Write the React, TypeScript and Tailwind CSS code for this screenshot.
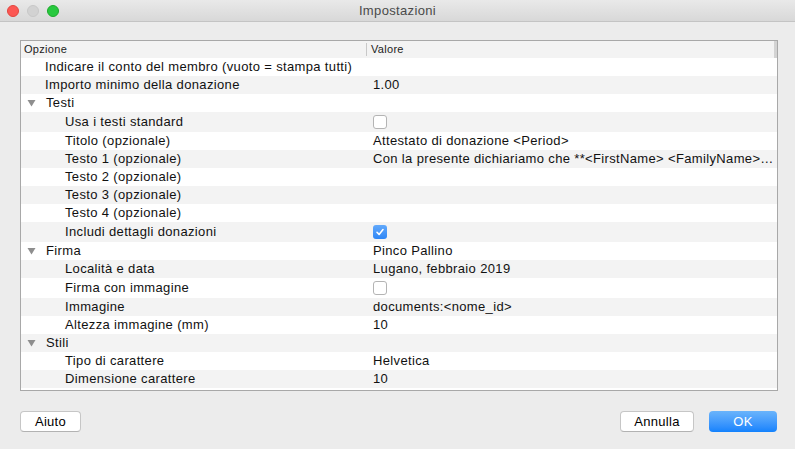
import React from "react";

type Row = {
  label: string;
  level: 0 | 1 | 2; // 0 = top item, 1 = group with triangle, 2 = child
  value?: string;
  check?: boolean;
};

const rows: Row[] = [
  { label: "Indicare il conto del membro (vuoto = stampa tutti)", level: 0 },
  { label: "Importo minimo della donazione", level: 0, value: "1.00" },
  { label: "Testi", level: 1 },
  { label: "Usa i testi standard", level: 2, check: false },
  { label: "Titolo (opzionale)", level: 2, value: "Attestato di donazione <Period>" },
  {
    label: "Testo 1 (opzionale)",
    level: 2,
    value: "Con la presente dichiariamo che **<FirstName> <FamilyName>…",
  },
  { label: "Testo 2 (opzionale)", level: 2 },
  { label: "Testo 3 (opzionale)", level: 2 },
  { label: "Testo 4 (opzionale)", level: 2 },
  { label: "Includi dettagli donazioni", level: 2, check: true },
  { label: "Firma", level: 1, value: "Pinco Pallino" },
  { label: "Località e data", level: 2, value: "Lugano, febbraio 2019" },
  { label: "Firma con immagine", level: 2, check: false },
  { label: "Immagine", level: 2, value: "documents:<nome_id>" },
  { label: "Altezza immagine (mm)", level: 2, value: "10" },
  { label: "Stili", level: 1 },
  { label: "Tipo di carattere", level: 2, value: "Helvetica" },
  { label: "Dimensione carattere", level: 2, value: "10" },
];

function Checkbox({ checked }: { checked: boolean }) {
  if (checked) {
    return (
      <span className="flex h-[14px] w-[14px] items-center justify-center rounded-[3px] bg-gradient-to-b from-[#62a9fb] to-[#2d86f6]">
        <svg width="10" height="10" viewBox="0 0 10 10">
          <path d="M2 5.3 L4.1 7.4 L8 2.6" fill="none" stroke="#fff" strokeWidth="1.6" strokeLinecap="round" strokeLinejoin="round" />
        </svg>
      </span>
    );
  }
  return <span className="block h-[14px] w-[14px] rounded-[3px] border border-[#b4b4b4] bg-white" />;
}

function Triangle() {
  return (
    <svg width="9" height="8" viewBox="0 0 9 8" className="mr-[10px]">
      <path d="M0.5 1 L8.5 1 L4.5 7.5 Z" fill="#8e8e8e" />
    </svg>
  );
}

function Button({ children, primary, width }: { children: React.ReactNode; primary?: boolean; width: string }) {
  return (
    <button
      className={
        primary
          ? `h-[21px] ${width} shrink-0 rounded-[4px] bg-gradient-to-b from-[#6ab4fb] to-[#1182fd] text-[13px] leading-none tracking-[0.3px] text-white`
          : `h-[21px] ${width} shrink-0 rounded-[4px] border border-[#c6c6c6] border-b-[#b2b2b2] bg-white text-[13px] leading-none tracking-[0.3px] text-black`
      }
    >
      {children}
    </button>
  );
}

export default function App() {
  return (
    <div
      className="flex h-[449px] w-[795px] flex-col bg-[#ececec] text-[#111]"
      style={{ fontFamily: '"Liberation Sans", Arial, sans-serif' }}
    >
      {/* Title bar */}
      <div className="grid h-[22px] grid-cols-[1fr_auto_1fr] items-center border-b border-[#c4c4c4] bg-gradient-to-b from-[#e9e9e9] to-[#d8d8d8]">
        <div className="flex items-center gap-[8px] pl-[7px]">
          <span className="h-[12px] w-[12px] rounded-full border border-[#e2463f] bg-[#fc5753]" />
          <span className="h-[12px] w-[12px] rounded-full border border-[#c8c8c8] bg-[#d2d2d2]" />
          <span className="h-[12px] w-[12px] rounded-full border border-[#1daa2b] bg-[#28c93f]" />
        </div>
        <div className="text-[13px] tracking-[0.35px] text-[#4a4a4a]">Impostazioni</div>
        <div />
      </div>

      {/* Table */}
      <div className="px-[20px] pt-[18px]">
        <div className="h-[351px] w-[758px] border border-[#a8a8a8] bg-white">
          <div className="flex h-[17px] items-center bg-[#f3f3f3] text-[11px] tracking-[0.3px] text-[#222]">
            <div className="w-[345px] pl-[3px]">Opzione</div>
            <div className="h-[13px] w-px bg-[#c8c8c8]" />
            <div className="flex-1 pl-[4px]">Valore</div>
            <div className="h-[17px] w-[3px] bg-[#d3d3d3]" />
          </div>
          {rows.map((r, i) => (
            <div
              key={r.label}
              className={`flex items-center text-[13px] tracking-[0.35px] ${r.check !== undefined ? "h-[20px]" : "h-[18px]"} ${
                i % 2 === 1 ? "bg-[#f3f3f3]" : "bg-white"
              }`}
            >
              <div
                className={`flex w-[345px] items-center ${
                  r.level === 0 ? "pl-[24px]" : r.level === 1 ? "pl-[6px]" : "pl-[44px]"
                }`}
              >
                {r.level === 1 && <Triangle />}
                <span className="whitespace-nowrap">{r.label}</span>
              </div>
              <div className="flex flex-1 items-center overflow-hidden whitespace-nowrap pl-[7px]">
                {r.check !== undefined ? <Checkbox checked={r.check} /> : r.value}
              </div>
            </div>
          ))}
        </div>
      </div>

      {/* Buttons */}
      <div className="flex items-center pl-[20px] pr-[18px] pt-[20px]">
        <Button width="w-[61px]">Aiuto</Button>
        <div className="flex-1" />
        <Button width="w-[74px]">Annulla</Button>
        <div className="w-[15px] shrink-0" />
        <Button primary width="w-[68px]">OK</Button>
      </div>
    </div>
  );
}
